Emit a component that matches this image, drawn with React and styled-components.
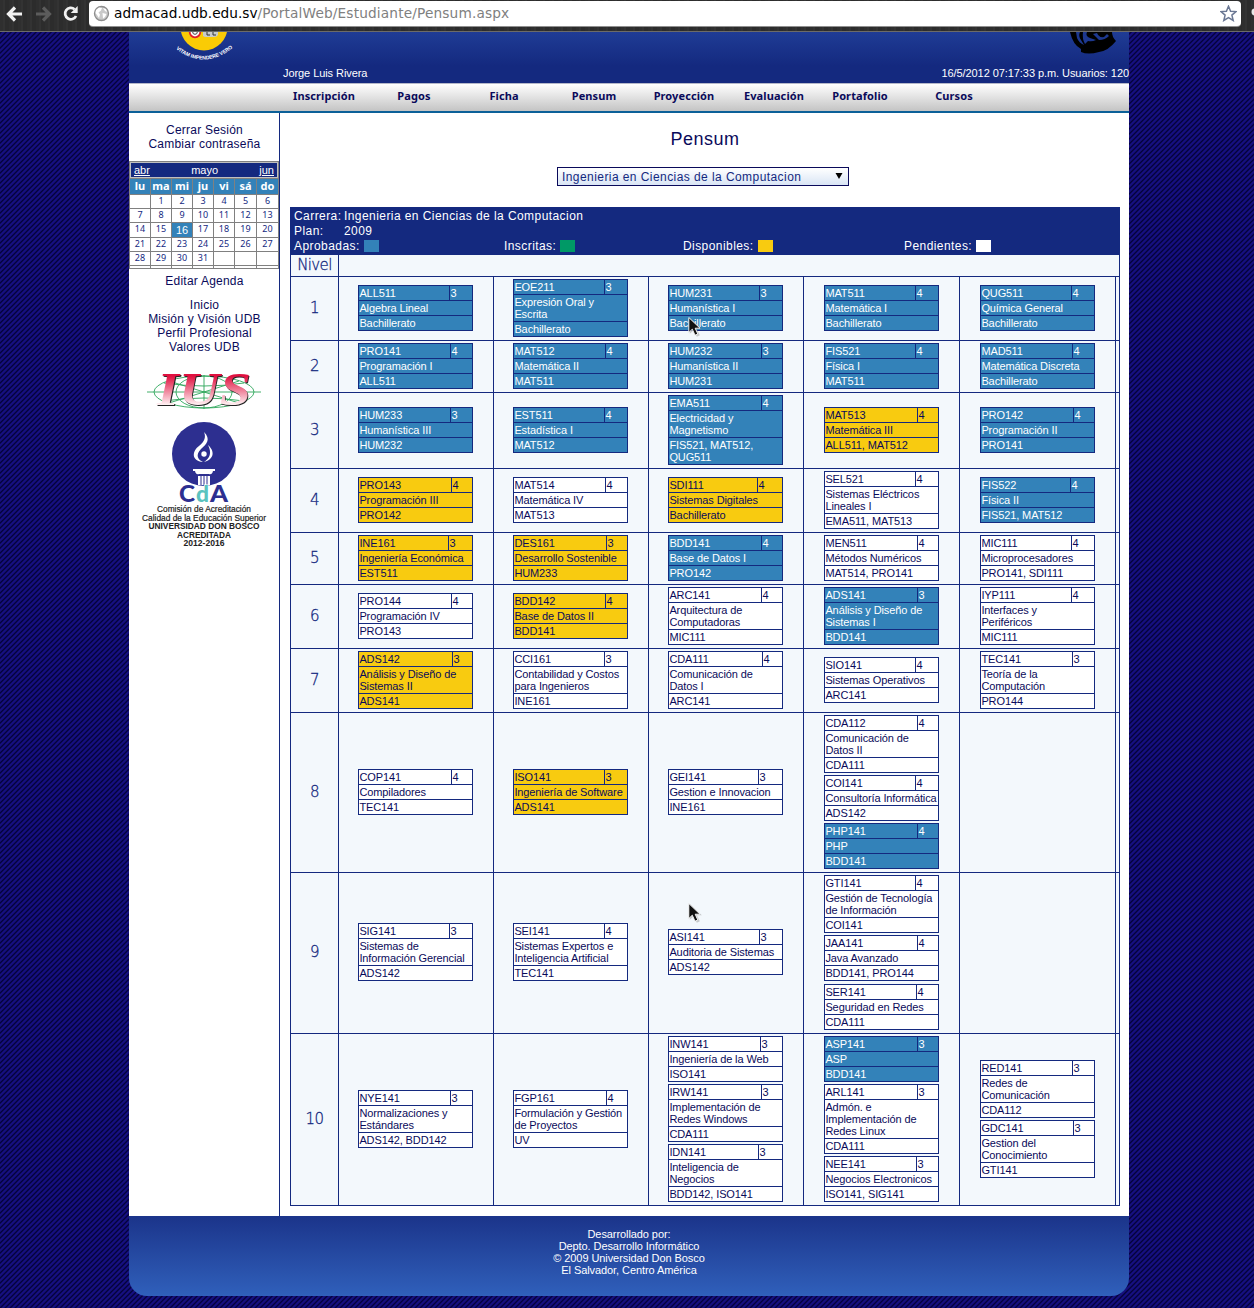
import React from "react";
import styled, { createGlobalStyle } from "styled-components";

const NAVY = "#14297f";
const INK = "#0a0a5a";
const STATUS = {
  a: { bg: "#3382b9", fg: "#fff" },
  i: { bg: "#009966", fg: "#fff" },
  d: { bg: "#f8cb10", fg: INK },
  p: { bg: "#fff", fg: INK },
};

const Global = createGlobalStyle`
  * { box-sizing: border-box; }
  html, body { margin: 0; padding: 0; overflow: hidden; }
  body { font: 11px/12px "Liberation Sans", Arial, sans-serif; color: ${INK}; }
`;

const Page = styled.div`
  position: relative;
  height: 1308px;
  overflow: hidden;
  background-color: #120c7e;
  background-image: repeating-linear-gradient(135deg, #160f80 0, #160f80 1.2px, #04033c 1.9px, #04033c 2.4px, #160f80 3.5355px);
`;

/* ---------- browser bar ---------- */
const Browser = styled.div`
  display: flex;
  align-items: flex-start;
  height: 32px;
  padding: 1px 0 0 3px;
  background: repeating-linear-gradient(90deg, #2f2f2f 0 3px, #333 3px 5px, #2c2c2c 5px 9px);
  border-bottom: 1px solid #6c6b68;
`;
const BarIcon = styled.svg`
  width: 24px;
  height: 25px;
  margin-right: ${(p) => p.$gap || 0}px;
  flex: none;
`;
const Omnibox = styled.div`
  display: flex;
  flex: none;
  align-items: center;
  width: 1152px;
  height: 25px;
  padding: 0 4px 0 4px;
  background: #fff;
  border-radius: 4px;
  box-shadow: 0 1px 0 #8f8f8f;
  font: 13.7px/24px "DejaVu Sans", sans-serif;
  color: #000;
  white-space: nowrap;
`;
const Url = styled.div`
  flex: 1;
  margin: -2px 0 0 4px;
`;
const Path = styled.span`
  color: #808080;
  letter-spacing: 0.15px;
`;

/* ---------- site frame ---------- */
const Site = styled.div`
  width: 1000px;
  margin-left: 129px;
`;
const Header = styled.header`
  display: flex;
  align-items: flex-end;
  height: 51px;
  background: linear-gradient(#1f3c95 0, #14297f 34px);
  color: #fff;
  line-height: 12px;
  letter-spacing: -0.07px;
`;
const Crest = styled.svg`
  align-self: flex-start;
  width: 64px;
  height: 34px;
  margin-left: 43px;
`;
const UserName = styled.div`
  margin: 0 auto 4px 47px;
`;
const HeaderRight = styled.div`
  display: flex;
  flex-direction: column;
  align-items: flex-end;
  justify-content: space-between;
  height: 51px;
  padding-bottom: 4px;
  white-space: nowrap;
`;
const Mascot = styled.svg`
  width: 50px;
  height: 24px;
  margin-right: 11px;
`;
const Nav = styled.nav`
  display: flex;
  height: 30px;
  padding-left: 150px;
  background: linear-gradient(#fff, #c4c4c4);
  border-top: 1px solid #b5b8c9;
  border-bottom: 2px solid #0b6098;
`;
const NavItem = styled.a`
  width: 90px;
  padding-right: ${(p) => p.$shift || 0}px;
  text-align: center;
  font: bold 11px/23px "Noto Sans", sans-serif;
  letter-spacing: 0.1px;
`;
const Body = styled.div`
  display: flex;
  height: 1103px;
  background: #fff;
`;
const Side = styled.aside`
  width: 151px;
  padding-top: 10px;
  border-right: 1px solid ${NAVY};
`;
const Links = styled.div`
  display: flex;
  flex-direction: column;
  margin-bottom: ${(p) => p.$after}px;
  text-align: center;
  padding-left: 1px;
  font-size: 12px;
  line-height: 14px;
  letter-spacing: 0.22px;
`;
const Calendar = styled.div`
  display: grid;
  grid-template-columns: 20px 20px 20px 20px 20px 21px 21px;
  grid-template-rows: 16px 15px 13px 13px 14px 13px 13px 2px;
  gap: 1px;
  width: 150px;
  padding: 1px;
  margin-bottom: 5px;
  background: #808080;
  text-align: center;
`;
const Month = styled.div`
  grid-column: 1 / -1;
  display: flex;
  justify-content: space-between;
  padding: 0 3px;
  border: 1px solid #c0c0c0;
  background: ${NAVY};
  color: #fff;
  line-height: 14px;
`;
const DayName = styled.div`
  background: #3382b9;
  color: #fff;
  font: bold 11px/14px "Noto Sans", sans-serif;
`;
const Day = styled.div`
  overflow: hidden;
  background: ${(p) => (p.$today ? "#3382b9" : "#fff")};
  color: ${(p) => (p.$today ? "#fff" : NAVY)};
  font: ${(p) => (p.$today ? '11px/15px "Liberation Sans"' : '9px/12px "Noto Sans"')}, sans-serif;
`;
const SideLogo = styled.svg`
  display: block;
  width: 150px;
  height: ${(p) => p.$h}px;
  overflow: visible;
`;
const Main = styled.main`
  width: 849px;
  padding: 14px 0 0 10px;
`;
const Title = styled.h1`
  width: 830px;
  margin: 0 0 15px;
  text-align: center;
  font-weight: normal;
  font-size: 18px;
  line-height: 25px;
  letter-spacing: 0.5px;
`;
const Select = styled.div`
  display: flex;
  justify-content: space-between;
  width: 292px;
  height: 19px;
  margin: 0 0 21px 267px;
  padding: 0 5px 0 4px;
  border: 1px solid ${INK};
  background: linear-gradient(#fff, #d9e5f5);
  color: ${NAVY};
  font-size: 12px;
  line-height: 19px;
  letter-spacing: 0.43px;
`;
const Caret = styled.svg`
  width: 8px;
  height: 17px;
`;

/* ---------- curriculum table ---------- */
const Plan = styled.section`
  width: 830px;
  border: 1px solid ${NAVY};
  border-bottom: 0;
  background: #f3f8fc;
`;
const PlanHead = styled.div`
  height: 47px;
  padding: 1px 3px 0;
  background: ${NAVY};
  color: #fff;
  font-size: 12px;
  line-height: 15px;
  letter-spacing: 0.43px;
`;
const Field = styled.div`
  display: grid;
  grid-template-columns: 50px 1fr;
`;
const Legend = styled.div`
  display: grid;
  grid-template-columns: 210px 179px 221px 1fr;
`;
const LegendItem = styled.div`
  display: flex;
  align-items: center;
  gap: 4px;
`;
const Swatch = styled.i`
  width: 15px;
  height: 12px;
  margin-bottom: 1px;
  background: ${(p) => STATUS[p.$s].bg};
`;
const Row = styled.div`
  display: grid;
  grid-template-columns: 47px 154px 154px 154px 155px 155px 3px;
  column-gap: 1px;
  height: ${(p) => p.$h}px;
  border-bottom: 1px solid ${NAVY};
`;
const Level = styled.div`
  display: flex;
  align-items: center;
  justify-content: center;
  box-shadow: 1px 0 0 ${NAVY};
  color: ${NAVY};
  font: 200 15px/18px "DejaVu Sans Light", "DejaVu Sans", sans-serif;
  letter-spacing: -0.6px;
  -webkit-text-stroke: 0.3px ${NAVY};
  padding-bottom: 2px;
`;
const Cell = styled.div`
  display: flex;
  flex-direction: column;
  justify-content: center;
  gap: 2px;
  padding: 2px 0 ${(p) => p.$bottom || 3}px ${(p) => p.$left}px;
  box-shadow: 1px 0 0 ${NAVY};
`;
const Card = styled.article`
  flex: none;
  width: 115px;
  border: 1px solid ${NAVY};
  background: ${(p) => STATUS[p.$s].bg};
  color: ${(p) => STATUS[p.$s].fg};
  margin: ${(p) => (p.$nudge ? "1px 0 -1px" : 0)};
  letter-spacing: -0.11px;
`;
const Top = styled.div`
  display: grid;
  grid-template-columns: ${(p) => p.$split - 1}px 1fr;
`;
const Text = styled.div`
  padding: 1px 0 1px 0.4px;
  white-space: pre;
  border-top: ${(p) => (p.$line ? `1px solid ${NAVY}` : 0)};
  border-left: ${(p) => (p.$bar ? `1px solid ${NAVY}` : 0)};
`;

const Footer = styled.footer`
  height: 80px;
  padding-top: 12px;
  border-radius: 0 0 18px 18px;
  background: linear-gradient(#1b348a, #3060bb);
  color: #fff;
  text-align: center;
  line-height: 12px;
  letter-spacing: -0.08px;
`;
const Pointer = styled.svg`
  position: absolute;
  left: 688px;
  top: ${(p) => p.$y}px;
  width: 14px;
  height: 20px;
`;

// Each course: status, code, credits, name, prerequisites, x of the credit divider.
const levels = [
  [64, [["a", "ALL511", 3, "Algebra Lineal", "Bachillerato", 91]], [["a", "EOE211", 3, "Expresión Oral y\nEscrita", "Bachillerato", 91]], [["a", "HUM231", 3, "Humanística I", "Bachillerato", 91]], [["a", "MAT511", 4, "Matemática I", "Bachillerato", 91]], [["a", "QUG511", 4, "Química General", "Bachillerato", 91]]],
  [52, [["a", "PRO141", 4, "Programación I", "ALL511", 92]], [["a", "MAT512", 4, "Matemática II", "MAT511", 92]], [["a", "HUM232", 3, "Humanística II", "HUM231", 93]], [["a", "FIS521", 4, "Física I", "MAT511", 91]], [["a", "MAD511", 4, "Matemática Discreta", "Bachillerato", 92]]],
  [76, [["a", "HUM233", 3, "Humanística III", "HUM232", 92]], [["a", "EST511", 4, "Estadística I", "MAT512", 91]], [["a", "EMA511", 4, "Electricidad y\nMagnetismo", "FIS521, MAT512,\nQUG511", 93]], [["d", "MAT513", 4, "Matemática III", "ALL511, MAT512", 93]], [["a", "PRO142", 4, "Programación II", "PRO141", 93]]],
  [64, [["d", "PRO143", 4, "Programación III", "PRO142", 93]], [["p", "MAT514", 4, "Matemática IV", "MAT513", 92]], [["d", "SDI111", 4, "Sistemas Digitales", "Bachillerato", 89]], [["p", "SEL521", 4, "Sistemas Eléctricos\nLineales I", "EMA511, MAT513", 91]], [["a", "FIS522", 4, "Física II", "FIS521, MAT512", 90]]],
  [52, [["d", "INE161", 3, "Ingeniería Económica", "EST511", 90]], [["d", "DES161", 3, "Desarrollo Sostenible", "HUM233", 93]], [["a", "BDD141", 4, "Base de Datos I", "PRO142", 93]], [["p", "MEN511", 4, "Métodos Numéricos", "MAT514, PRO141", 93]], [["p", "MIC111", 4, "Microprocesadores", "PRO141, SDI111", 91]]],
  [64, [["p", "PRO144", 4, "Programación IV", "PRO143", 93]], [["d", "BDD142", 4, "Base de Datos II", "BDD141", 92]], [["p", "ARC141", 4, "Arquitectura de\nComputadoras", "MIC111", 93]], [["a", "ADS141", 3, "Análisis y Diseño de\nSistemas I", "BDD141", 93]], [["p", "IYP111", 4, "Interfaces y\nPeriféricos", "MIC111", 91]]],
  [64, [["d", "ADS142", 3, "Análisis y Diseño de\nSistemas II", "ADS141", 94]], [["p", "CCI161", 3, "Contabilidad y Costos\npara Ingenieros", "INE161", 91]], [["p", "CDA111", 4, "Comunicación de\nDatos I", "ARC141", 94]], [["p", "SIO141", 4, "Sistemas Operativos", "ARC141", 91]], [["p", "TEC141", 3, "Teoría de la\nComputación", "PRO144", 92]]],
  [160, [["p", "COP141", 4, "Compiladores", "TEC141", 93]], [["d", "ISO141", 3, "Ingeniería de Software", "ADS141", 91]], [["p", "GEI141", 3, "Gestion e Innovacion", "INE161", 90]], [["p", "CDA112", 4, "Comunicación de\nDatos II", "CDA111", 93], ["p", "COI141", 4, "Consultoría Informática", "ADS142", 91], ["a", "PHP141", 4, "PHP", "BDD141", 93]], []],
  [161, [["p", "SIG141", 3, "Sistemas de\nInformación Gerencial", "ADS142", 91]], [["p", "SEI141", 4, "Sistemas Expertos e\nInteligencia Artificial", "TEC141", 91]], [["p", "ASI141", 3, "Auditoria de Sistemas", "ADS142", 91]], [["p", "GTI141", 4, "Gestión de Tecnología\nde Información", "COI141", 91], ["p", "JAA141", 4, "Java Avanzado", "BDD141, PRO144", 93], ["p", "SER141", 4, "Seguridad en Redes", "CDA111", 92, true]], []],
  [172, [["p", "NYE141", 3, "Normalizaciones y\nEstándares", "ADS142, BDD142", 92]], [["p", "FGP161", 4, "Formulación y Gestión\nde Proyectos", "UV", 93]], [["p", "INW141", 3, "Ingeniería de la Web", "ISO141", 92], ["p", "IRW141", 3, "Implementación de\nRedes Windows", "CDA111", 93], ["p", "IDN141", 3, "Inteligencia de\nNegocios", "BDD142, ISO141", 90]], [["a", "ASP141", 3, "ASP", "BDD141", 93], ["p", "ARL141", 3, "Admón. e\nImplementación de\nRedes Linux", "CDA111", 93], ["p", "NEE141", 3, "Negocios Electronicos", "ISO141, SIG141", 92]], [["p", "RED141", 3, "Redes de\nComunicación", "CDA112", 92], ["p", "GDC141", 3, "Gestion del\nConocimiento", "GTI141", 93]]],
];

const nav = ["Inscripción", "Pagos", "Ficha", "Pensum", "Proyección", "Evaluación", "Portafolio", "Cursos"];
const legend = [["Aprobadas:", "a"], ["Inscritas:", "i"], ["Disponibles:", "d"], ["Pendientes:", "p"]];
const days = ["", ...Array.from({ length: 31 }, (_, i) => i + 1), ...Array(10).fill("")];

function Course({ data }) {
  const [status, code, credits, name, req, split, nudge] = data;
  return (
    <Card $s={status} $nudge={nudge}>
      <Top $split={split}>
        <Text>{code}</Text>
        <Text $bar>{credits}</Text>
      </Top>
      <Text $line>{name}</Text>
      <Text $line>{req}</Text>
    </Card>
  );
}

function Arrow({ y }) {
  return (
    <Pointer $y={y} viewBox="0 0 14 20">
      <path d="M1 0V16L5 12.5 8 19 11 17.5 8 11.5H13Z" fill="#999" opacity=".5" transform="translate(.8 .8)" />
      <path d="M.8 .5V15.5L4.3 12.2 7 18.2 9.8 17 7.2 11.2H12Z" fill="#111" stroke="#fff" strokeWidth=".9" />
    </Pointer>
  );
}

function IusLogo() {
  const letters = {
    x: 28,
    y: 35,
    textLength: 94,
    lengthAdjust: "spacingAndGlyphs",
    fontFamily: "Liberation Serif, serif",
    fontWeight: "bold",
    fontStyle: "italic",
    fontSize: 47,
  };
  return (
    <SideLogo $h={46} viewBox="0 0 150 46">
      <defs>
        <linearGradient id="ius" x1="0" y1="0" x2="0" y2="1">
          <stop offset=".25" stopColor="#e0103f" />
          <stop offset=".55" stopColor="#f08aa0" />
          <stop offset=".8" stopColor="#fff0f2" />
        </linearGradient>
      </defs>
      <g fill="none" stroke="#2da65a" strokeWidth=".9">
        <ellipse cx="75" cy="22" rx="50" ry="16" />
        <ellipse cx="75" cy="22" rx="28" ry="16" />
        <path d="M18 22H132M75 5V39M40 11L110 33M110 11L40 33M35 13Q75 19 115 13M35 31Q75 25 115 31" />
      </g>
      <text {...letters} fill="#222" transform="translate(.9 1)">IUS</text>
      <text {...letters} fill="url(#ius)">IUS</text>
    </SideLogo>
  );
}

function CdaLogo() {
  const line = { textAnchor: "middle", lengthAdjust: "spacingAndGlyphs", fill: "#222" };
  return (
    <SideLogo $h={135} viewBox="0 0 150 135">
      <circle cx="75" cy="38" r="32" fill="#2d2f90" />
      <path d="M75 16C82 23 78 28 72 33C66 39 69 44 74 46C62 45 63 35 70 30C76 25 77 21 75 16Z" fill="#fff" />
      <path d="M75 46C84 44 87 36 79 29C83 37 81 42 75 46Z" fill="#fff" />
      <circle cx="75" cy="38" r="2.7" fill="#fff" />
      <path d="M64 53H86V55H84Q83 59 80 58H70Q67 59 66 55H64Z" fill="#fff" />
      <path d="M69 60H81V69H69Z" fill="#fff" />
      <path d="M72 60V69M75 60V69M78 60V69" stroke="#2d2f90" strokeWidth="1" />
      <g fontFamily="Lato, sans-serif" fontWeight="900" fontSize="23">
        <text x="50" y="86" fill="#2d2f90" textLength="16" lengthAdjust="spacingAndGlyphs">C</text>
        <text x="67" y="86" fill="#5bc3bf" stroke="#fff" strokeWidth="1.2" paintOrder="stroke" textLength="13" lengthAdjust="spacingAndGlyphs">d</text>
        <text x="81" y="86" fill="#2d2f90" textLength="18" lengthAdjust="spacingAndGlyphs">A</text>
      </g>
      <g fontFamily="Liberation Sans, sans-serif" fontSize="8.5">
        <text x="75" y="96" textLength="94" {...line} stroke="#222" strokeWidth=".2">Comisión de Acreditación</text>
        <text x="75" y="104.5" textLength="124" {...line} stroke="#222" strokeWidth=".2">Calidad de la Educación Superior</text>
        <g fontWeight="bold">
          <text x="75" y="113" textLength="111" {...line}>UNIVERSIDAD DON BOSCO</text>
          <text x="75" y="121.500" textLength="54" {...line}>ACREDITADA</text>
          <text x="75" y="130" textLength="41" {...line}>2012-2016</text>
        </g>
      </g>
    </SideLogo>
  );
}

export default function App() {
  return (
    <Page>
      <Global />
      <Browser>
        <BarIcon $gap={4} viewBox="0 0 24 25">
          <path d="M12 6.500L5.500 13L12 19.500M6 13H19" fill="none" stroke="#f2f2f2" strokeWidth="3.200" />
        </BarIcon>
        <BarIcon $gap={4} viewBox="0 0 24 25">
          <path d="M12 6.500L18.500 13L12 19.500M18 13H5" fill="none" stroke="#5c5c5c" strokeWidth="3.200" />
        </BarIcon>
        <BarIcon $gap={6} viewBox="0 0 24 25">
          <path d="M15.500 8.200A5.700 5.700 0 1 0 17 15" fill="none" stroke="#f2f2f2" strokeWidth="2.800" />
          <path d="M18.700 5V12H11.700Z" fill="#f2f2f2" />
        </BarIcon>
        <Omnibox>
          <svg width="17" height="17" viewBox="0 0 17 17">
            <circle cx="8.500" cy="8.500" r="7" fill="#c9c9c9" stroke="#8d8d8d" strokeWidth="1.300" />
            <path d="M3 5L6 2.500 9 3 8 5.500 5.500 7.500 7 9.500 6 13 4 10 2.500 8ZM10 3L13 4 14 7 12 6ZM9.500 8L13.500 9 12 12 10 13.500Z" fill="#fff" />
          </svg>
          <Url>admacad.udb.edu.sv<Path>/PortalWeb/Estudiante/Pensum.aspx</Path></Url>
          <svg width="17" height="17" viewBox="0 0 17 17">
            <path d="M8.500 1.200L10.600 6.200 16 6.600 11.900 10.100 13.200 15.500 8.500 12.600 3.800 15.500 5.100 10.100 1 6.600 6.400 6.200Z" fill="#fff" stroke="#6b7894" strokeWidth="1.500" />
          </svg>
        </Omnibox>
        <BarIcon viewBox="0 0 24 25">
          <circle cx="14" cy="11" r="3.500" fill="#e8e8e8" />
        </BarIcon>
      </Browser>

      <Site>
        <Header>
          <Crest viewBox="0 0 64 34">
            <circle cx="32" cy="-5" r="23.500" fill="#facb05" />
            <circle cx="23" cy="0" r="5.300" fill="#fff" stroke="#e01f2d" strokeWidth="1.800" />
            <circle cx="23" cy="0" r="2.300" fill="none" stroke="#444" />
            <path d="M31 -1H46V3Q45 5 42 5H34Q32 5 31 4Z" fill="#c9cacb" />
            <path d="M35 0V3H38M41 0V3H44" stroke="#333" fill="none" />
            <path id="motto" d="M4 17Q32 39 62 15" fill="none" />
            <text fontSize="5.200" fontWeight="bold" fill="#fff" fontFamily="Liberation Sans, sans-serif">
              <textPath href="#motto" startOffset="0" textLength="62" lengthAdjust="spacingAndGlyphs">VITAM IMPENDERE VERO</textPath>
            </text>
          </Crest>
          <UserName>Jorge Luis Rivera</UserName>
          <HeaderRight>
            <Mascot viewBox="0 0 50 24">
              <path d="M2 0H44Q44 5 48 9Q40 19 31 20Q20 23 13 20V17Q5 13 2 0Z" fill="#000" />
              <path d="M8 0H12Q10 4 13 8L16 13Q11 11 9 6ZM15 0H19Q17 4 22 6L28 8Q24 10 20 9L17 12Q14 7 15 0ZM25 2L29 1Q31 6 36 5L39 2L41 4Q37 8 31 8Z" fill="#1d388f" />
              <circle cx="34" cy="3" r="2" fill="#000" />
            </Mascot>
            <div>16/5/2012 07:17:33 p.m. Usuarios: 120</div>
          </HeaderRight>
        </Header>
        <Nav>
          {nav.map((n) => (
            <NavItem key={n} $shift={n === "Portafolio" ? 8 : 0}>{n}</NavItem>
          ))}
        </Nav>
        <Body>
          <Side>
            <Links $after={10}>
              <a>Cerrar Sesión</a>
              <a>Cambiar contraseña</a>
            </Links>
            <Calendar>
              <Month><u>abr</u><span>mayo</span><u>jun</u></Month>
              {["lu", "ma", "mi", "ju", "vi", "sá", "do"].map((d) => (
                <DayName key={d}>{d}</DayName>
              ))}
              {days.map((d, i) => (
                <Day key={i} $today={d === 16}>{d}</Day>
              ))}
            </Calendar>
            <Links $after={10}><a>Editar Agenda</a></Links>
            <Links $after={16}>
              <a>Inicio</a>
              <a>Misión y Visión UDB</a>
              <a>Perfil Profesional</a>
              <a>Valores UDB</a>
            </Links>
            <IusLogo />
            <CdaLogo />
          </Side>
          <Main>
            <Title>Pensum</Title>
            <Select>
              <span>Ingenieria en Ciencias de la Computacion</span>
              <Caret viewBox="0 0 8 17"><path d="M.5 5H7.500L4 11Z" fill="#000" /></Caret>
            </Select>
            <Plan>
              <PlanHead>
                <Field><span>Carrera:</span><span>Ingenieria en Ciencias de la Computacion</span></Field>
                <Field><span>Plan:</span><span>2009</span></Field>
                <Legend>
                  {legend.map(([label, s]) => (
                    <LegendItem key={s}>{label}<Swatch $s={s} /></LegendItem>
                  ))}
                </Legend>
              </PlanHead>
              <Row $h={22}><Level>Nivel</Level></Row>
              {levels.map(([h, ...cells], i) => (
                <Row key={i} $h={h}>
                  <Level>{i + 1}</Level>
                  {cells.map((courses, c) => (
                    <Cell key={c} $left={c > 2 ? 20 : 19} $bottom={i === 8 ? 4 : 3}>
                      {courses.map((d) => <Course key={d[1]} data={d} />)}
                    </Cell>
                  ))}
                </Row>
              ))}
            </Plan>
          </Main>
        </Body>
        <Footer>
          <div>Desarrollado por:</div>
          <div>Depto. Desarrollo Informático</div>
          <div>© 2009 Universidad Don Bosco</div>
          <div>El Salvador, Centro América</div>
        </Footer>
      </Site>
      <Arrow y={317} />
      <Arrow y={903} />
    </Page>
  );
}
